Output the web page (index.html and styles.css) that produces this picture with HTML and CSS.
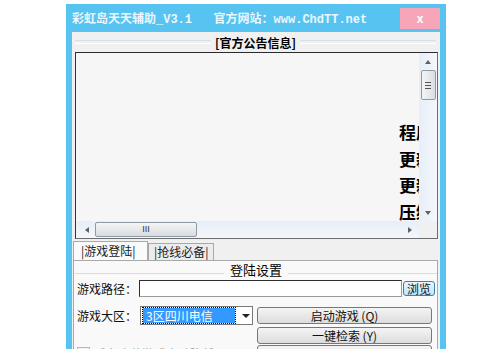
FILE: index.html
```html
<!DOCTYPE html>
<html lang="zh-CN">

<head>
  <meta charset="UTF-8">
  <title>彩虹岛天天辅助</title>
  <link rel="stylesheet" href="styles.css">
</head>

<body>
  <div class="win">
    <div class="titlebar">
      <span class="title">彩虹岛天天辅助_V3.1   官方网站：www.ChdTT.net</span>
      <span class="close">x</span>
    </div>
    <div class="client">
      <div class="group-head bold"><span>[官方公告信息]</span></div>
      <div class="memo">
        <div class="memo-main">
          <div class="memo-text">
            <p>程序</p>
            <p>更新</p>
            <p>更新</p>
            <p>压缩</p>
          </div>
          <div class="vscroll">
            <span class="arr up"></span>
            <span class="vthumb"><i></i><i></i><i></i></span>
            <span class="arr down"></span>
          </div>
        </div>
        <div class="memo-foot">
          <div class="hscroll">
            <span class="arr left"></span>
            <span class="hthumb">III</span>
            <span class="arr right"></span>
          </div>
          <div class="corner"></div>
        </div>
      </div>

      <div class="tabs">
        <span class="tab current">|游戏登陆|</span>
        <span class="tab">|抢线必备|</span>
      </div>
      <div class="panel">
        <div class="group-head sub"><span>登陆设置</span></div>
        <div class="row">
          <span class="label">游戏路径：</span>
          <span class="input"></span>
          <span class="btn browse">浏览</span>
        </div>
        <div class="row row2">
          <span class="label">游戏大区：</span>
          <span class="combo"><span class="sel">3区四川电信</span><span class="drop"></span></span>
          <span class="btn wide">启动游戏 (Q)</span>
        </div>
        <div class="row row3">
          <span class="btn wide">一键检索 (Y)</span>
        </div>
        <div class="row row4">
          <span class="check"><span class="box">✓</span>后台隐藏游戏自动降低[CPU]</span>
          <span class="btn wide"></span>
        </div>
      </div>
    </div>
  </div>
</body>

</html>
```

FILE: styles.css
```css
* {
  margin: 0;
  padding: 0;
  box-sizing: border-box;
}

body {
  background: #fff;
  overflow: hidden;
  font-family: "Noto Sans CJK SC", sans-serif;
  font-size: 12px;
  color: #000;
}

.win {
  width: 380px;
  height: 360px;
  margin: 4px 0 0 66px;
  padding: 0 6px;
  background: #57c3f1;
  overflow: hidden;
}

.titlebar {
  height: 28px;
  display: flex;
  align-items: center;
  justify-content: space-between;
}

.title {
  font-family: "Liberation Mono", "Noto Sans CJK SC", monospace;
  font-weight: bold;
  font-size: 12px;
  color: #eaf7fd;
  white-space: pre;
  margin-top: -1px;
}

.close {
  width: 40px;
  height: 21px;
  margin-top: 1px;
  background: #f6a6b8;
  color: #fff;
  font-family: "Liberation Sans", sans-serif;
  font-weight: bold;
  font-size: 12px;
  display: flex;
  align-items: center;
  justify-content: center;
}

.client {
  height: 340px;
  background: #f0f0f0;
  padding: 0 2px 0 1px;
  display: flex;
  flex-direction: column;
}

.group-head {
  display: flex;
  align-items: center;
  gap: 4px;
  height: 20px;
  margin: 0 2px;
}

.group-head::before,
.group-head::after {
  content: "";
  flex: 1;
  height: 2px;
  border-top: 1px solid #d5dfe5;
  border-bottom: 1px solid #fff;
}

.bold span {
  font-weight: bold;
  font-size: 12px;
}

.memo {
  margin: 0 0 0 2px;
  width: 363px;
  height: 187px;
  border: 1px solid #6d6d6d;
  border-top-color: #2b2b2b;
  border-left-color: #333;
  background: #f6f6f6;
  display: flex;
  flex-direction: column;
}

.memo-main {
  flex: 1;
  display: flex;
  min-height: 0;
}

.memo-text {
  flex: 1;
  overflow: hidden;
  padding: 66px 0 0 323px;
  white-space: nowrap;
}

.memo-text p {
  font-size: 17px;
  font-weight: bold;
  line-height: 26.5px;
}

.vscroll {
  width: 18px;
  background: linear-gradient(to right, #e6eef7, #f4f7fb);
  display: flex;
  flex-direction: column;
  align-items: center;
}

.arr {
  width: 0;
  height: 0;
  border: 3px solid transparent;
}

.arr.up {
  border-bottom: 4px solid #606060;
  margin-top: 4px;
}

.arr.down {
  border-top: 4px solid #606060;
  margin-top: auto;
  margin-bottom: 3px;
}

.vthumb {
  width: 15px;
  height: 30px;
  margin-top: 6px;
  border: 1px solid #8f9aa6;
  border-radius: 2px;
  background: linear-gradient(to right, #f5f5f5, #dadde2);
  display: flex;
  flex-direction: column;
  align-items: center;
  justify-content: center;
  gap: 2px;
}

.vthumb i {
  display: block;
  width: 6px;
  height: 1px;
  background: #555;
}

.memo-foot {
  height: 17px;
  display: flex;
}

.hscroll {
  flex: 1;
  background: linear-gradient(#e6eef7, #f4f7fb);
  display: flex;
  align-items: center;
  padding: 0 4px 0 6px;
}

.arr.left {
  border-right: 4px solid #606060;
}

.arr.right {
  border-left: 4px solid #606060;
  margin-left: auto;
}

.hthumb {
  width: 102px;
  height: 15px;
  margin-left: 6px;
  border: 1px solid #8f9aa6;
  border-radius: 2px;
  background: linear-gradient(#f5f5f5, #d8dbe0);
  font-family: "Liberation Sans", sans-serif;
  font-size: 9px;
  color: #333;
  text-align: center;
  line-height: 13px;
}

.corner {
  width: 18px;
  background: #f0f0f0;
}

.tabs {
  display: flex;
  margin-top: 2px;
  height: 19px;
  align-items: flex-end;
}

.tab {
  height: 17px;
  padding: 0 5px;
  border: 1px solid #a9a9a9;
  border-bottom: none;
  background: #ececec;
  line-height: 15px;
  font-size: 12px;
  color: #222;
}

.tab.current {
  height: 19px;
  width: 75px;
  background: #fafafa;
  line-height: 18px;
  padding-left: 7px;
}

.panel {
  width: 365px;
  flex: 1;
  border: 1px solid #a9a9a9;
  background: #f9f9f9;
  padding: 0 0 0 3px;
}

.group-head.sub {
  height: 16px;
  align-items: flex-end;
  margin: 0 0 0 -2px;
  gap: 6px;
}

.group-head.sub span {
  font-size: 13px;
  line-height: 16px;
  margin-bottom: -1px;
}

.row {
  display: flex;
  align-items: center;
  margin-top: 3px;
  height: 17px;
}

.label {
  width: 62px;
  font-size: 12px;
  color: #111;
}

.input {
  width: 263px;
  height: 17px;
  border: 1px solid #2f2f2f;
  border-right-color: #999;
  border-bottom-color: #999;
  background: #fff;
}

.btn {
  display: flex;
  align-items: center;
  justify-content: center;
  height: 17px;
  border: 1px solid #777;
  border-radius: 3px;
  background: linear-gradient(#f4f4f4, #dddddd);
  font-size: 12px;
  color: #111;
}

.browse {
  width: 32px;
  height: 15px;
  margin-left: 1px;
  border-color: #3c7fb1;
  background: linear-gradient(#eaf6fd, #bee6fd);
}

.row2 {
  margin-top: 9px;
  height: 19px;
}

.combo {
  width: 113px;
  height: 19px;
  margin-left: 1px;
  border: 1px solid #777;
  background: #fff;
  display: flex;
  align-items: center;
  padding: 1px;
}

.sel {
  width: 92px;
  height: 15px;
  margin-left: 1px;
  background: #3399ff;
  color: #fff;
  outline: 1px dotted #000;
  font-size: 12px;
  line-height: 15px;
  padding-left: 3px;
}

.drop {
  width: 0;
  height: 0;
  margin-left: 7px;
  border: 4px solid transparent;
  border-top: 4px solid #222;
  margin-top: 4px;
}

.btn.wide {
  width: 175px;
  margin-left: 4px;
}

.row3 {
  margin-top: 2px;
  padding-left: 176px;
}

.row4 {
  margin-top: 1px;
  height: 19px;
  align-items: flex-start;
}

.check {
  display: flex;
  align-items: center;
  gap: 4px;
  width: 176px;
  color: #9a9a9a;
  font-size: 12px;
  white-space: nowrap;
  overflow: hidden;
}

.box {
  width: 13px;
  height: 13px;
  border: 1px solid #b8b8b8;
  background: #f3f3f3;
  color: #a0a0a0;
  font-size: 11px;
  line-height: 11px;
  text-align: center;
}
```
